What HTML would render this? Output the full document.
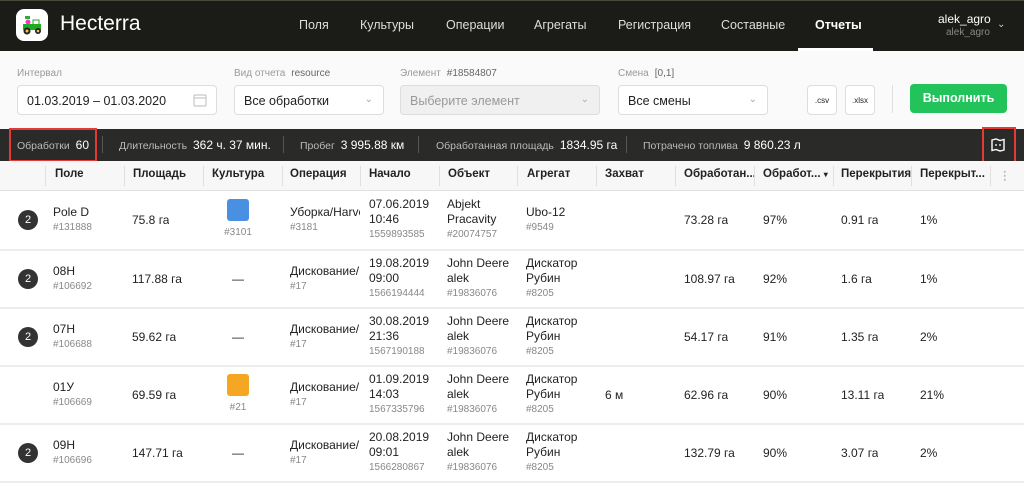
<!DOCTYPE html><html><head><meta charset="utf-8"><style>
*{margin:0;padding:0;box-sizing:border-box}
body{width:1024px;height:484px;overflow:hidden;background:#fff;font-family:"Liberation Sans",Arial,sans-serif;color:#222;position:relative}
.abs{position:absolute}
.hdr{left:0;top:0;width:1024px;height:51px;background:#1b1b17;border-top:1px solid #4a4838}
.nav{top:18px;font-size:12.5px;color:#ddd}
.flt{left:0;top:51px;width:1024px;height:78px;background:#fafafa}
.lbl{font-size:10px;color:#999;top:68px}
.lbl b{font-weight:normal;color:#666;margin-left:6px}
.inp{top:85px;height:30px;border:1px solid #ddd;border-radius:4px;background:#fff;font-size:12.5px;padding:8px 9px;color:#222}
.chev{position:absolute;right:10px;top:8px;font-size:10px;color:#aaa}
.stat{left:0;top:129px;width:1024px;height:32px;background:#2a2a28;color:#bbb;font-size:10.5px}
.st{top:138px;font-size:10.5px;color:#bbb}
.st b{color:#fff;font-weight:normal;font-size:12px;margin-left:3px}
.sep{top:136px;width:1px;height:17px;background:#555}
.th{left:0;top:161px;width:1024px;height:30px;background:#f7f7f7;border-bottom:1px solid #e2e2e2}
.thc{top:168px;font-size:11.5px;font-weight:bold;color:#222;white-space:nowrap}
.ths{top:166px;width:1px;height:20px;background:#e0e0e0}
.row{left:0;width:1024px;border-bottom:2px solid #ececec}
.c{position:absolute;top:0;bottom:0;display:flex;flex-direction:column;justify-content:center;font-size:12px;line-height:15px;color:#222;white-space:nowrap;overflow:hidden}
.c small{font-size:10px;color:#888;line-height:16px}
.bd{left:18px;width:20px;height:20px;border-radius:50%;background:#333;color:#fff;font-size:11px;text-align:center;line-height:20px;position:absolute;top:50%;margin-top:-10px}
.sq{width:22px;height:22px;border-radius:3px;margin:0 auto 4px}
</style></head><body>
<div class="abs hdr"></div>
<div class="abs" style="left:16px;top:9px;width:32px;height:32px;background:#fff;border-radius:8px"></div>
<svg class="abs" style="left:20px;top:14px" width="24" height="22" viewBox="0 0 24 22"><rect x="5" y="2" width="5" height="3" fill="#3a3"/><circle cx="8" cy="8" r="2.5" fill="#f3c"/><rect x="3" y="10" width="18" height="6" fill="#2a2"/><rect x="13" y="6" width="6" height="5" fill="none" stroke="#2a2"/><circle cx="7" cy="17" r="3.5" fill="#222"/><circle cx="7" cy="17" r="1.5" fill="#ec3"/><circle cx="18" cy="17" r="3" fill="#222"/><circle cx="18" cy="17" r="1.3" fill="#ec3"/></svg>
<div class="abs" style="left:60px;top:12px;font-size:21px;color:#fff">Hecterra</div>
<div class="abs nav" style="left:299px">Поля</div>
<div class="abs nav" style="left:360px">Культуры</div>
<div class="abs nav" style="left:446px">Операции</div>
<div class="abs nav" style="left:534px">Агрегаты</div>
<div class="abs nav" style="left:618px">Регистрация</div>
<div class="abs nav" style="left:721px">Составные</div>
<div class="abs nav" style="left:815px;color:#fff;font-weight:bold">Отчеты</div>
<div class="abs" style="left:798px;top:48px;width:75px;height:3px;background:#fff"></div>
<div class="abs" style="left:938px;top:12px;font-size:12px;color:#fff">alek_agro</div>
<div class="abs" style="left:946px;top:27px;font-size:10px;color:#888">alek_agro</div>
<div class="abs" style="left:997px;top:19px;font-size:10px;color:#ccc">&#8964;</div>
<div class="abs flt"></div>
<div class="abs lbl" style="left:17px">Интервал</div>
<div class="abs inp" style="left:17px;width:200px">01.03.2019 – 01.03.2020<svg style="position:absolute;right:9px;top:7px" width="14" height="14" viewBox="0 0 14 14"><rect x="1" y="2" width="12" height="11" rx="1" fill="none" stroke="#bbb"/><line x1="1" y1="5" x2="13" y2="5" stroke="#bbb"/></svg></div>
<div class="abs lbl" style="left:234px">Вид отчета<b>resource</b></div>
<div class="abs inp" style="left:234px;width:150px">Все обработки<span class="chev">&#8964;</span></div>
<div class="abs lbl" style="left:400px">Элемент<b>#18584807</b></div>
<div class="abs inp" style="left:400px;width:200px;background:#f0f0f0;color:#999">Выберите элемент<span class="chev">&#8964;</span></div>
<div class="abs lbl" style="left:618px">Смена<b>[0,1]</b></div>
<div class="abs inp" style="left:618px;width:150px">Все смены<span class="chev">&#8964;</span></div>
<div class="abs inp" style="left:807px;width:30px;font-size:8px;padding:10px 3px;text-align:center">.csv</div>
<div class="abs inp" style="left:845px;width:30px;font-size:8px;padding:10px 3px;text-align:center">.xlsx</div>
<div class="abs" style="left:892px;top:85px;width:1px;height:28px;background:#e0e0e0"></div>
<div class="abs" style="left:910px;top:84px;width:97px;height:29px;background:#22c35a;border-radius:4px;color:#fff;font-weight:bold;font-size:12.5px;text-align:center;line-height:29px">Выполнить</div>
<div class="abs stat"></div>
<div class="abs st" style="left:17px">Обработки <b>60</b></div>
<div class="abs sep" style="left:102px"></div>
<div class="abs st" style="left:119px">Длительность <b>362 ч. 37 мин.</b></div>
<div class="abs sep" style="left:283px"></div>
<div class="abs st" style="left:300px">Пробег <b>3 995.88 км</b></div>
<div class="abs sep" style="left:418px"></div>
<div class="abs st" style="left:436px">Обработанная площадь <b>1834.95 га</b></div>
<div class="abs sep" style="left:626px"></div>
<div class="abs st" style="left:643px">Потрачено топлива <b>9 860.23 л</b></div>
<svg class="abs" style="left:990px;top:137px" width="16" height="16" viewBox="0 0 16 16"><path d="M2 3 L6 2 L10 3.5 L14 2.5 L14 13 L10 14 L6 12.5 L2 13.5 Z" fill="none" stroke="#fff" stroke-width="1.4"/><path d="M5 8h2M9 8h2" stroke="#fff" stroke-width="1.2"/></svg>
<div class="abs" style="left:9px;top:128px;width:88px;height:34px;border:2px solid #e53935"></div>
<div class="abs" style="left:982px;top:127px;width:34px;height:36px;border:2px solid #e53935"></div>
<div class="abs th"></div>
<div class="abs ths" style="left:45px"></div><div class="abs thc" style="left:55px">Поле</div>
<div class="abs ths" style="left:124px"></div><div class="abs thc" style="left:133px">Площадь</div>
<div class="abs ths" style="left:203px"></div><div class="abs thc" style="left:212px">Культура</div>
<div class="abs ths" style="left:282px"></div><div class="abs thc" style="left:290px">Операция</div>
<div class="abs ths" style="left:360px"></div><div class="abs thc" style="left:369px">Начало</div>
<div class="abs ths" style="left:439px"></div><div class="abs thc" style="left:448px">Объект</div>
<div class="abs ths" style="left:517px"></div><div class="abs thc" style="left:527px">Агрегат</div>
<div class="abs ths" style="left:596px"></div><div class="abs thc" style="left:605px">Захват</div>
<div class="abs ths" style="left:675px"></div><div class="abs thc" style="left:684px">Обработан...</div>
<div class="abs ths" style="left:754px"></div><div class="abs thc" style="left:763px">Обработ... <span style="font-size:8px">&#9662;</span></div>
<div class="abs ths" style="left:833px"></div><div class="abs thc" style="left:841px">Перекрытия</div>
<div class="abs ths" style="left:911px"></div><div class="abs thc" style="left:920px">Перекрыт...</div>
<div class="abs ths" style="left:990px"></div><div class="abs thc" style="left:999px;color:#bbb">&#8942;</div>

<div class="abs row" style="top:191px;height:60px">
<div class="bd">2</div>
<div class="c" style="left:53px">Pole D<small>#131888</small></div>
<div class="c" style="left:132px">75.8 га</div>
<div class="c" style="left:210px;width:56px;text-align:center"><div class="sq" style="background:#4a90e2"></div><small>#3101</small></div>
<div class="c" style="left:290px;width:70px">Уборка/Harvest<small>#3181</small></div>
<div class="c" style="left:369px">07.06.2019<br>10:46<small>1559893585</small></div>
<div class="c" style="left:447px">Abjekt<br>Pracavity<small>#20074757</small></div>
<div class="c" style="left:526px">Ubo-12<small>#9549</small></div>
<div class="c" style="left:684px">73.28 га</div>
<div class="c" style="left:763px">97%</div>
<div class="c" style="left:841px">0.91 га</div>
<div class="c" style="left:920px">1%</div>
</div>
<div class="abs row" style="top:251px;height:58px">
<div class="bd">2</div>
<div class="c" style="left:53px">08H<small>#106692</small></div>
<div class="c" style="left:132px">117.88 га</div>
<div class="c" style="left:210px;width:56px;text-align:center">—</div>
<div class="c" style="left:290px;width:70px">Дискование/<small>#17</small></div>
<div class="c" style="left:369px">19.08.2019<br>09:00<small>1566194444</small></div>
<div class="c" style="left:447px">John Deere<br>alek<small>#19836076</small></div>
<div class="c" style="left:526px">Дискатор<br>Рубин<small>#8205</small></div>
<div class="c" style="left:684px">108.97 га</div>
<div class="c" style="left:763px">92%</div>
<div class="c" style="left:841px">1.6 га</div>
<div class="c" style="left:920px">1%</div>
</div>
<div class="abs row" style="top:309px;height:58px">
<div class="bd">2</div>
<div class="c" style="left:53px">07H<small>#106688</small></div>
<div class="c" style="left:132px">59.62 га</div>
<div class="c" style="left:210px;width:56px;text-align:center">—</div>
<div class="c" style="left:290px;width:70px">Дискование/<small>#17</small></div>
<div class="c" style="left:369px">30.08.2019<br>21:36<small>1567190188</small></div>
<div class="c" style="left:447px">John Deere<br>alek<small>#19836076</small></div>
<div class="c" style="left:526px">Дискатор<br>Рубин<small>#8205</small></div>
<div class="c" style="left:684px">54.17 га</div>
<div class="c" style="left:763px">91%</div>
<div class="c" style="left:841px">1.35 га</div>
<div class="c" style="left:920px">2%</div>
</div>
<div class="abs row" style="top:367px;height:58px">
<div class="c" style="left:53px">01У<small>#106669</small></div>
<div class="c" style="left:132px">69.59 га</div>
<div class="c" style="left:210px;width:56px;text-align:center"><div class="sq" style="background:#f5a623"></div><small>#21</small></div>
<div class="c" style="left:290px;width:70px">Дискование/<small>#17</small></div>
<div class="c" style="left:369px">01.09.2019<br>14:03<small>1567335796</small></div>
<div class="c" style="left:447px">John Deere<br>alek<small>#19836076</small></div>
<div class="c" style="left:526px">Дискатор<br>Рубин<small>#8205</small></div>
<div class="c" style="left:605px">6 м</div>
<div class="c" style="left:684px">62.96 га</div>
<div class="c" style="left:763px">90%</div>
<div class="c" style="left:841px">13.11 га</div>
<div class="c" style="left:920px">21%</div>
</div>
<div class="abs row" style="top:425px;height:58px">
<div class="bd">2</div>
<div class="c" style="left:53px">09H<small>#106696</small></div>
<div class="c" style="left:132px">147.71 га</div>
<div class="c" style="left:210px;width:56px;text-align:center">—</div>
<div class="c" style="left:290px;width:70px">Дискование/<small>#17</small></div>
<div class="c" style="left:369px">20.08.2019<br>09:01<small>1566280867</small></div>
<div class="c" style="left:447px">John Deere<br>alek<small>#19836076</small></div>
<div class="c" style="left:526px">Дискатор<br>Рубин<small>#8205</small></div>
<div class="c" style="left:684px">132.79 га</div>
<div class="c" style="left:763px">90%</div>
<div class="c" style="left:841px">3.07 га</div>
<div class="c" style="left:920px">2%</div>
</div>
</body></html>
